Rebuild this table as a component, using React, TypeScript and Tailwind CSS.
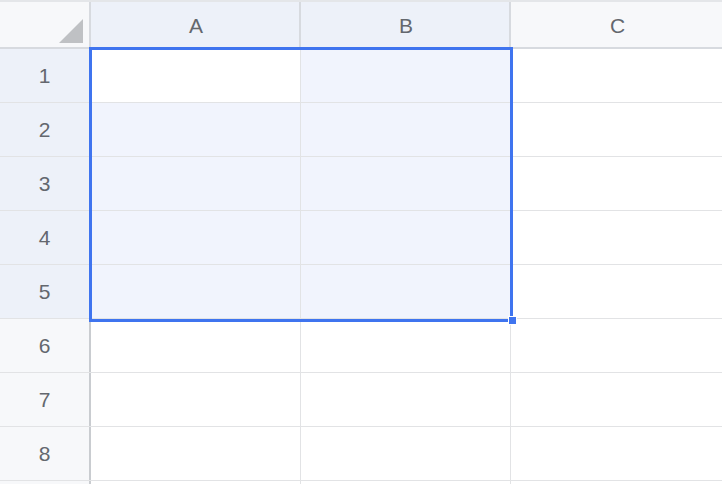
import React from 'react';

const cols = ['A', 'B', 'C'];
const rows = [1, 2, 3, 4, 5, 6, 7, 8];

const isSelected = (r: number, c: number) => r <= 5 && c < 2;

export default function App() {
  return (
    <div className="relative h-[484px] w-[722px] overflow-hidden bg-white font-['Liberation_Sans',Arial,sans-serif] text-[21px] text-[#63676e]">
      {/* header row */}
      <div className="flex h-[49px] border-t-2 border-b-2 border-t-[#e4e6e9] border-b-[#d7dadf]">
        <div className="flex w-[91px] shrink-0 items-end justify-end border-r-2 border-r-[#d7dadf] bg-[#f7f8fa] pr-[6px] pb-[4px]">
          <svg width="24" height="24" viewBox="0 0 24 24">
            <polygon points="24,0 24,24 0,24" fill="#bfc1c4" />
          </svg>
        </div>
        {cols.map((c, i) => (
          <div
            key={c}
            className={
              i < 2
                ? 'flex w-[210px] shrink-0 items-center justify-center border-r-2 border-r-[#d7dadf] bg-[#edf1f9] pt-[2px] pl-[2px]'
                : 'flex w-[211px] shrink-0 items-center justify-center bg-[#f7f8fa] pt-[2px] pl-[2px]'
            }
          >
            {c}
          </div>
        ))}
      </div>

      {/* body rows */}
      {rows.map((r) => (
        <div key={r} className="flex h-[54px] border-b border-b-[#e2e3e5]">
          <div
            className={
              r <= 5
                ? 'flex w-[91px] shrink-0 items-center justify-center border-r-2 border-r-[#c9ccd0] bg-[#edf1f9] pt-[1px]'
                : 'flex w-[91px] shrink-0 items-center justify-center border-r-2 border-r-[#c9ccd0] bg-[#f7f8fa] pt-[1px]'
            }
          >
            {r}
          </div>
          {cols.map((c, i) => (
            <div
              key={c}
              className={
                (i < 2 ? 'w-[210px] border-r border-r-[#e2e3e5] ' : 'w-[211px] ') +
                (isSelected(r, i) && !(r === 1 && i === 0) ? 'bg-[#f1f4fd]' : 'bg-white')
              }
            />
          ))}
        </div>
      ))}

      {/* partial next row */}
      <div className="flex h-[54px]">
        <div className="w-[91px] shrink-0 border-r-2 border-r-[#c9ccd0] bg-[#f7f8fa]" />
        <div className="w-[210px] border-r border-r-[#e2e3e5]" />
        <div className="w-[210px] border-r border-r-[#e2e3e5]" />
        <div className="w-[211px]" />
      </div>

      {/* selection range */}
      <div className="absolute left-[89px] top-[47px] h-[275px] w-[424px] border-[3px] border-[#3f74ef]" />
      <div className="absolute left-[508px] top-[316px] h-[9px] w-[9px] border border-white bg-[#3f74ef]" />
    </div>
  );
}
